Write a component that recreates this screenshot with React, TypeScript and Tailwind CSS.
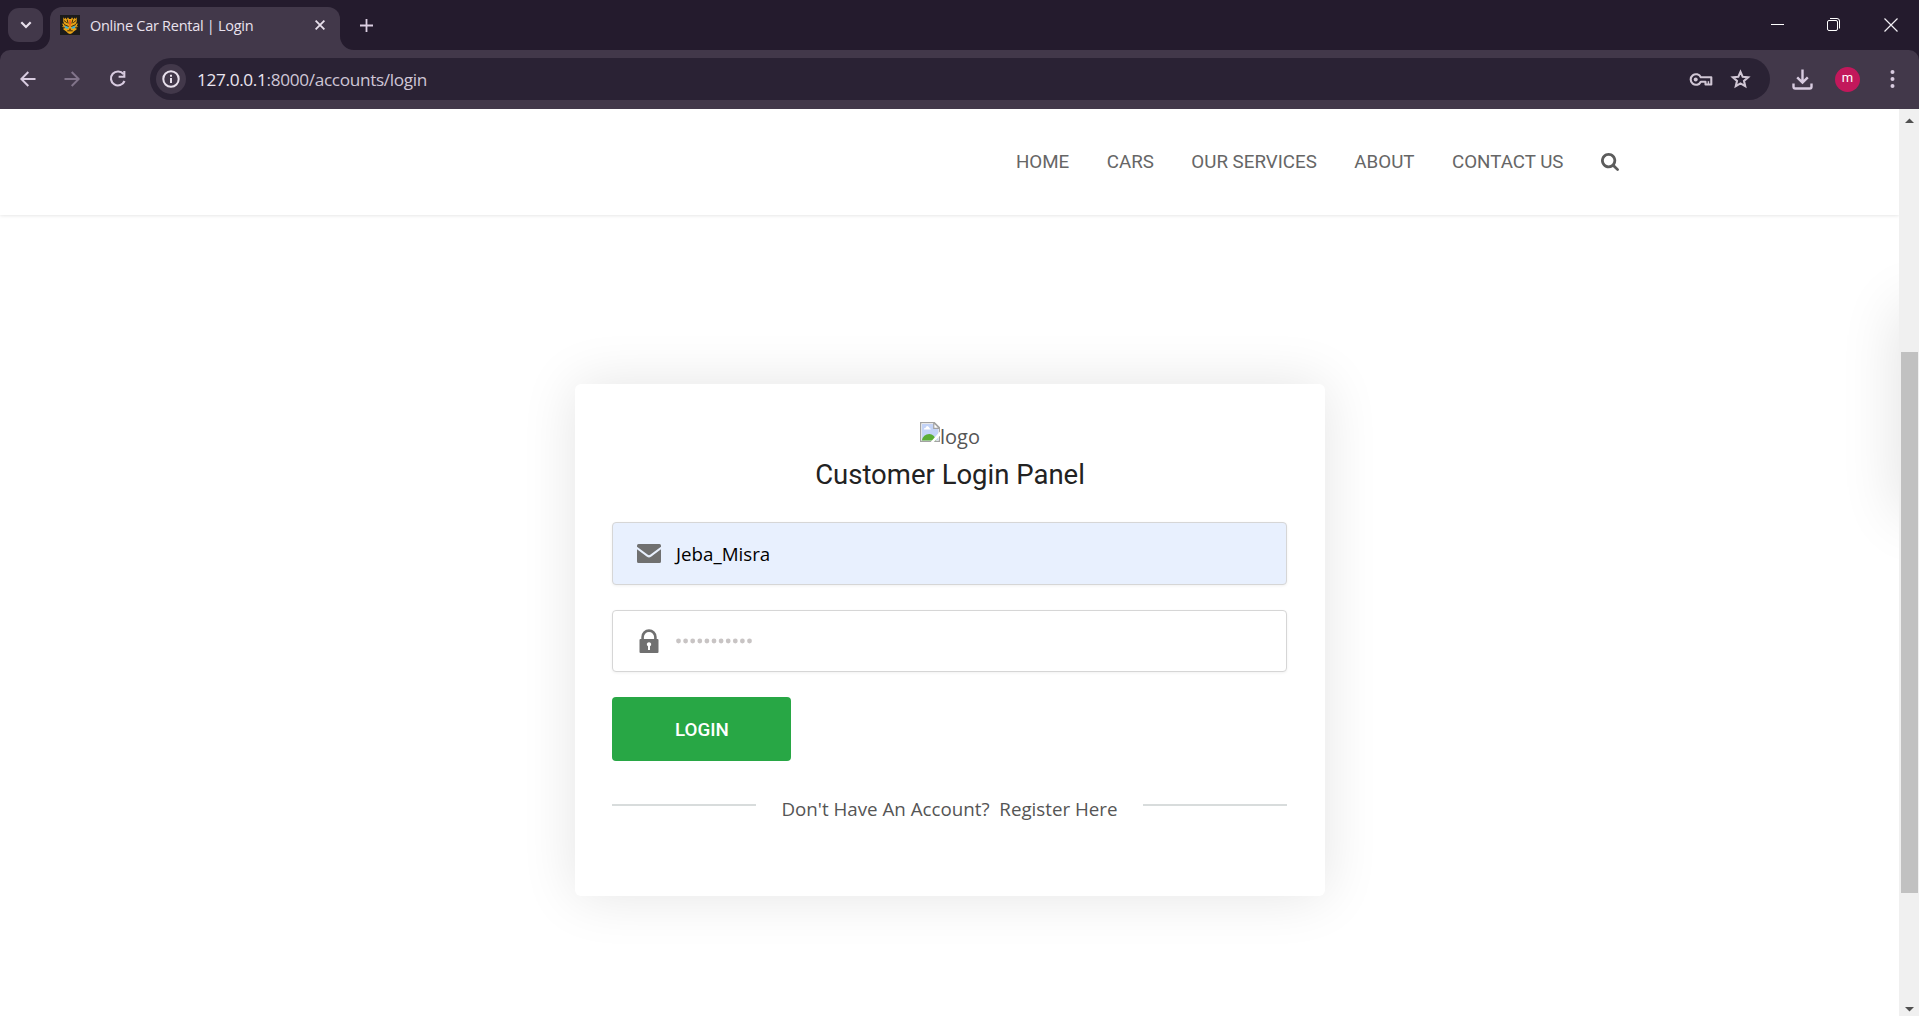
import React from "react";

const UI = "font-['Open_Sans','Noto_Sans',sans-serif]";

function ScrollArrow({ down = false }: { down?: boolean }) {
  return (
    <svg width="20" height="20" viewBox="0 0 20 20">
      <path d={down ? "M6 11h9l-4.500 4.500z" : "M6 14h9L10.500 9.500z"} fill="#505050" />
    </svg>
  );
}

function Favicon() {
  return (
    <svg width="20" height="20" viewBox="0 0 20 20">
      <path d="M0 0h20v20H0z" fill="#1b1b1b" />
      <path
        d="M3.300 2.300L4.800 4.200 5 2.600 6.600 4.300 8 2.300 9 4h2l1-1.700 1.400 2L15 2.600l.2 1.600 1.500-1.900V7l-1.200 1.800L18 8.500l-1.200 2.300 1 .7-1.500 1.700.3 1.300-2.600 1.800-2 2-2 .7-2-.7-2-2-2.600-1.800.3-1.300-1.500-1.700 1-.7L2 8.500l2.500.3L3.300 7z"
        fill="#eba414"
      />
      <path d="M9.400 5h1.200l.3 4-.9 3-.9-3z" fill="#f2541f" />
      <path d="M4.500 10.500l4.200 1.700-.7 1.600-2.600-.6zM15.500 10.500l-4.200 1.700.7 1.600 2.600-.6z" fill="#35b3e0" />
      <path
        d="M4 5.500l2.800 2.300M16 5.500l-2.800 2.300M7.200 4.500l.9 4M12.800 4.500l-.9 4M4 9.500l4.700 2M16 9.500l-4.700 2M7.300 15.800h5.400M9 14.200h2M3 12l1.800.9M17 12l-1.800.9"
        stroke="#231c12"
        strokeWidth="0.900"
        fill="none"
      />
    </svg>
  );
}

function TabStrip() {
  return (
    <div className="flex h-[50px] items-stretch bg-[#241b2d]">
      <div className="ml-2 mt-2 flex h-[34px] w-[35px] items-center justify-center rounded-[11px] bg-[#42384a]">
        <svg width="12" height="8" viewBox="0 0 12 8" fill="none" stroke="#e8e0ec" strokeWidth="2.200">
          <path d="M1.300 1.300L6 6l4.700-4.700" />
        </svg>
      </div>
      <div className="relative ml-[7px] mt-[7px] flex w-[290px] items-center rounded-t-[12px] bg-[#42384a] pb-[7px] pl-[10px]">
        <svg className="absolute -left-[14px] bottom-0" width="14" height="14" viewBox="0 0 14 14">
          <path d="M14 0v14H0A14 14 0 0 0 14 0z" fill="#42384a" />
        </svg>
        <svg className="absolute -right-[14px] bottom-0" width="14" height="14" viewBox="0 0 14 14">
          <path d="M0 0v14h14A14 14 0 0 1 0 0z" fill="#42384a" />
        </svg>
        <Favicon />
        <span className="ml-[10px] mt-0.5 w-[225px] whitespace-nowrap text-[14.500px] leading-5 tracking-[-0.280px] text-[#e9e2ee]">
          Online Car Rental | Login
        </span>
        <svg width="10" height="10" viewBox="0 0 10 10" fill="none" stroke="#e8e0ec" strokeWidth="1.800">
          <path d="M.6.600l8.800 8.800M9.400.600L.6 9.400" />
        </svg>
      </div>
      <svg className="ml-[19.500px] mt-[18.500px]" width="13" height="13" viewBox="0 0 13 13" stroke="#dccfe2" strokeWidth="1.800">
        <path d="M6.500 0v13M0 6.500h13" />
      </svg>
      <div className="ml-auto mr-[21px] flex items-center pb-px">
        <svg className="mr-[43px]" width="13" height="13" viewBox="0 0 13 13">
          <path d="M0 6h13v1H0z" fill="#fff" />
        </svg>
        <svg className="mr-[44px]" width="13" height="13" viewBox="0 0 13 13" fill="none" stroke="#fff">
          <rect x=".5" y="2.500" width="10" height="10" rx="1.500" />
          <path d="M3 .5h7a2.500 2.500 0 0 1 2.500 2.500v7.500" />
        </svg>
        <svg width="14" height="14" viewBox="0 0 14 14" fill="none" stroke="#f2eff4" strokeWidth="1.200">
          <path d="M.5.500l13 13M13.500.500L.5 13.500" />
        </svg>
      </div>
    </div>
  );
}

function Toolbar() {
  return (
    <div className="bg-[#241b2d]">
      <div className="flex h-[59px] items-center rounded-t-[10px] bg-[#42384a] pb-px">
        <svg className="ml-5" width="16" height="16" viewBox="0 0 16 16" fill="none" stroke="#d8cbe0" strokeWidth="2">
          <path d="M15.500 8H2M8.300 1L1.300 8l7 7" />
        </svg>
        <svg className="ml-[28px]" width="16" height="16" viewBox="0 0 16 16" fill="none" stroke="#81748a" strokeWidth="2">
          <path d="M.5 8H14M7.700 1l7 7-7 7" />
        </svg>
        <svg className="ml-[29px]" width="18" height="18" viewBox="0 0 18 18" fill="none" stroke="#d8cbe0" strokeWidth="2.100">
          <path d="M14.500 4.200A7 7 0 1 0 15.500 11" />
          <path d="M15.300 1v5.700H9.600" />
        </svg>
        <div className="ml-[23px] flex h-[42px] w-[1620px] items-center rounded-full bg-[#2a2234]">
          <div className="ml-[6px] flex size-[30px] items-center justify-center rounded-full bg-[#42384a]">
            <svg width="18" height="18" viewBox="0 0 18 18" fill="none" stroke="#e8e0ec" strokeWidth="2">
              <circle cx="9" cy="9" r="7.700" />
              <path d="M9 8v4.900M9 4.800v1.900" />
            </svg>
          </div>
          <div className="ml-[11px] whitespace-nowrap pt-0.5 text-[17.200px] leading-6 tracking-[-0.330px] text-[#cfc6d6]">
            <span className="text-[#ebe5ef]">127.0.0.1</span>:8000/accounts/login
          </div>
          <svg className="ml-auto mt-px" width="24" height="15" viewBox="0 0 24 15" fill="none" stroke="#d0c6d4" strokeWidth="2.100">
            <path d="M11.800 5.300A5.300 5.300 0 1 0 11.800 9.700H16.500V12.500H22.300V5.300z" strokeLinejoin="round" />
            <path d="M19.400 9.200v3.500" strokeWidth="1.500" />
            <circle cx="6.700" cy="7.500" r="2" fill="#d0c6d4" stroke="none" />
          </svg>
          <svg className="ml-[17px] mr-[19.500px]" width="21" height="20" viewBox="0 0 21 20" fill="none" stroke="#d0c6d4" strokeWidth="2.100">
            <path d="M10.500 2.800l2.200 5 5.400.5-4.100 3.600 1.200 5.300-4.700-2.800-4.700 2.800L7 11.900 2.900 8.300l5.400-.5z" />
          </svg>
        </div>
        <svg className="ml-[22px]" width="21" height="21" viewBox="0 0 21 21" fill="none" stroke="#d8cbe0" strokeWidth="2.400">
          <path d="M10.500.500v13M5.200 8.300l5.300 5.300 5.300-5.300M1.500 14.500v3.200q0 1.800 1.800 1.800h14.400q1.800 0 1.800-1.800v-3.200" />
        </svg>
        <div className="ml-[22px] flex size-[25px] items-center justify-center rounded-full bg-[#c2185b] pb-[2px] font-[Roboto,sans-serif] text-[13px] text-white">
          m
        </div>
        <svg className="ml-[30px]" width="5" height="18" viewBox="0 0 5 18" fill="#d8cbe0">
          <circle cx="2.500" cy="2.100" r="2" />
          <circle cx="2.500" cy="9" r="2" />
          <circle cx="2.500" cy="15.900" r="2" />
        </svg>
      </div>
    </div>
  );
}

const LINKS = ["Home", "Cars", "Our Services", "About", "Contact Us"];

function SiteHeader() {
  return (
    <header className="flex h-[106px] items-center justify-end bg-white pr-[280px] shadow-[0_0_4px_rgba(0,0,0,0.15)]">
      <nav className="flex items-center gap-[37.500px] font-[Roboto,sans-serif] text-[18.750px] uppercase leading-[30px] text-[#666]">
        {LINKS.map((l) => (
          <a key={l}>{l}</a>
        ))}
        <svg width="18" height="18" viewBox="0 0 1664 1664" fill="#5c5c5c">
          <path d="M1152 704q0-185-131.500-316.500T704 256 387.500 387.500 256 704t131.500 316.500T704 1152t316.500-131.500T1152 704zm512 832q0 52-38 90t-90 38q-54 0-90-38l-343-342q-179 124-399 124-143 0-273.500-55.500t-225-150-150-225T0 704t55.500-273.500 150-225 225-150T704 0t273.500 55.500 225 150 150 225T1408 704q0 220-124 399l343 343q37 37 37 90z" />
        </svg>
      </nav>
    </header>
  );
}

function BrokenImage() {
  return (
    <span className="flex h-[29px] items-start">
      <svg width="20" height="20" viewBox="0 0 16 16">
        <path d="M.5.500h11l4 4v11H.5z" fill="#fff" stroke="#a3a3a3" />
        <path d="M1.500 1.500h9.500v4h3.500V14.500H1.500z" fill="#c3d3f7" />
        <path d="M3 6q0-1.500 1.500-1.500Q5 3 6.200 3.300 7.500 3.500 7.600 5 8.600 5 8.600 6z" fill="#fff" />
        <path d="M1.500 14.800q1-5.300 6-5.300 4 0 5.500 5.300z" fill="#5aad35" />
        <path d="M16 7.500V11l-5 5H8.500z" fill="#fff" />
        <path d="M11 .5V5h4.500z" fill="#fff" stroke="#a3a3a3" />
      </svg>
      <span className="text-[20px] leading-[29px]">logo</span>
    </span>
  );
}

function LoginCard() {
  return (
    <section className="mx-auto mt-[169px] flex h-[512px] w-[750px] flex-col rounded-[6px] bg-white px-[37.500px] pt-[38px] shadow-[0_0_56px_rgba(0,0,0,0.11)]">
      <div className="flex flex-col items-center pl-px">
        <BrokenImage />
        <h1 className="mt-[6px] whitespace-nowrap font-[Roboto,sans-serif] text-[27.500px] leading-9 text-[#222]">Customer Login Panel</h1>
      </div>
      <div className="mt-[29px] flex h-[63px] shrink-0 items-center rounded-[4px] border border-[#d6d6d6] bg-[#e8f0fe] pl-6 shadow-[0_1px_3px_rgba(0,0,0,0.06)]">
        <svg className="mb-px" width="24" height="19" viewBox="0 0 24 19" fill="#707070">
          <path d="M1.500 0h21Q24 0 24 1.500v1.200L13.200 10.800q-1.200.8-2.400 0L0 2.700V1.500Q0 0 1.500 0z" />
          <path d="M0 5.200l10 7.600q2 1.400 4 0l10-7.600v12.300q0 1.500-1.500 1.500h-21Q0 19 0 17.500z" />
        </svg>
        <span className="ml-[15px] text-[18.750px] leading-7 text-black">Jeba_Misra</span>
      </div>
      <div className="mt-[25px] flex h-[62px] shrink-0 items-center rounded-[4px] border border-[#d6d6d6] bg-white pl-[26px] shadow-[0_1px_3px_rgba(0,0,0,0.06)]">
        <svg width="20" height="24" viewBox="0 0 20 24">
          <path d="M3.600 12V8a6.400 6.400 0 0 1 12.800 0v4" fill="none" stroke="#707070" strokeWidth="2.600" />
          <path d="M1.500 10h17q1 0 1 1v12q0 1-1 1h-17q-1 0-1-1V11q0-1 1-1z" fill="#707070" />
          <path d="M10 13.200a2.100 2.100 0 0 1 1 4V21H9v-3.800a2.100 2.100 0 0 1 1-4z" fill="#fff" />
        </svg>
        <svg className="ml-[17px]" width="76" height="6" viewBox="0 0 76 6" fill="#c8c4c4">
          {Array.from({ length: 11 }, (_, i) => (
            <circle key={i} cx={2.500 + i * 7.100} cy={3} r={2.400} />
          ))}
        </svg>
      </div>
      <button className="mt-[25px] h-16 w-[179px] shrink-0 rounded-[4px] bg-[#28a745] pl-px pt-0.5 font-[Roboto,sans-serif] text-[18.750px] font-medium text-white">
        LOGIN
      </button>
      <div className="mt-[31px] flex items-start justify-between">
        <span className="mt-3 h-0.5 w-36 bg-[#d8dcdc]" />
        <span className="whitespace-pre text-[18.750px] leading-[34px] text-[#555]">Don't Have An Account?  Register Here</span>
        <span className="mt-3 h-0.5 w-36 bg-[#d8dcdc]" />
      </div>
    </section>
  );
}

export default function App() {
  return (
    <div className={`${UI} flex h-[1016px] w-[1919px] flex-col overflow-hidden bg-white`}>
      <TabStrip />
      <Toolbar />
      <div className="flex min-h-0 flex-1">
        <main className="relative min-w-0 flex-1 overflow-hidden text-[#555]">
          <SiteHeader />
          <LoginCard />
          <div className="absolute -right-[60px] top-[198px] h-[208px] w-[60px] shadow-[0_0_60px_rgba(0,0,0,0.12)]" />
        </main>
        <div className="flex w-5 flex-col justify-between bg-[#f0f0f0]">
          <ScrollArrow />
          <div className="mb-auto ml-0.5 mt-[223px] h-[541px] w-[17px] bg-[#c1c1c1]" />
          <ScrollArrow down />
        </div>
      </div>
    </div>
  );
}
